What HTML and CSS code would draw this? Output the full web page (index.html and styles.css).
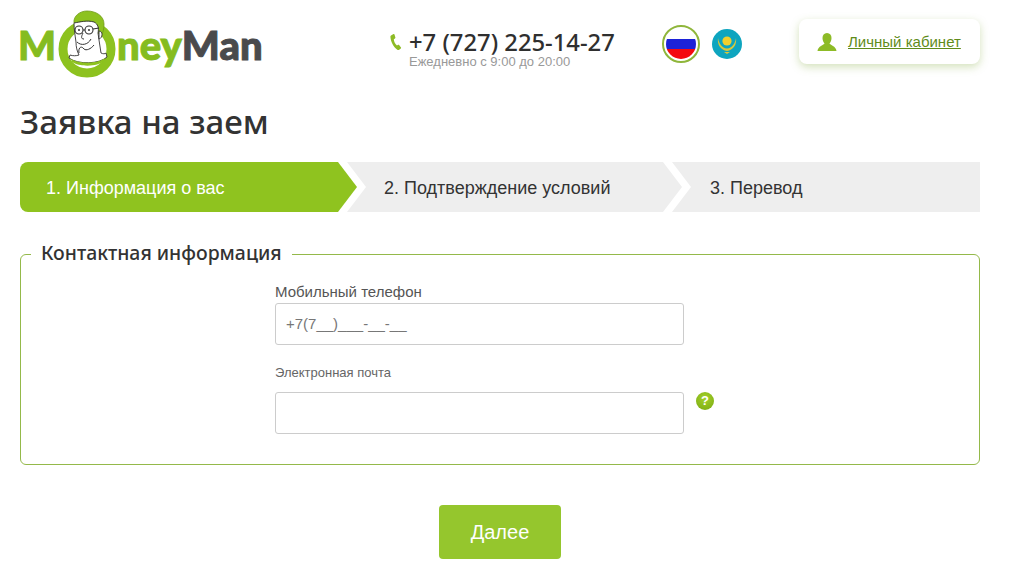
FILE: index.html
```html
<!DOCTYPE html>
<html lang="en">
<head>
    <meta charset="UTF-8">
    <meta name="viewport" content="width=device-width, initial-scale=1.0">
    <title>Заявка на заем - MoneyMan</title>
    <link rel="stylesheet" href="styles.css">
</head>
<body>
    <div class="page">
        <header class="header">
            <a class="logo" href="#">
                <span class="logo-green">M</span>
                <svg class="logo-face" width="60" height="70" viewBox="0 0 60 70">
                    <circle cx="29" cy="40" r="24" fill="none" stroke="#8dc21f" stroke-width="9"/>
                    <!-- hair -->
                    <path d="M16 14 C15 7 22 2 29 2 C38 2 46 7 46 15 C46 20 45 24 43 27 L40 24 C41 19 40 15 36 13 C29 11 22 13 16 14 Z" fill="#8dc21f" stroke="#6f9a16" stroke-width=".8"/>
                    <!-- face and neck -->
                    <path d="M16 14 C22 13 29 11 36 13 C40 15 41 19 40 24 L41 31 L43 44 C45 45 47 45 48 44 L49 48 C42 55 20 56 11 49 L12 46 C15 47 18 47 21 46 C19 42 18 38 18 33 C17 26 16 20 16 14 Z" fill="#fff" stroke="#333" stroke-width=".9"/>
                    <!-- collar -->
                    <path d="M13 50 C21 55 40 55 47 49 L46 52 C40 58 21 58 14 53 Z" fill="#8dc21f"/>
                    <!-- glasses -->
                    <circle cx="21" cy="21" r="4" fill="#fff" stroke="#333" stroke-width="1.1"/>
                    <circle cx="31" cy="21" r="4" fill="#fff" stroke="#333" stroke-width="1.1"/>
                    <path d="M25 21 H27 M35 20 L41 19" stroke="#333" stroke-width="1.1" fill="none"/>
                    <circle cx="21" cy="21" r="1" fill="#333"/>
                    <circle cx="31" cy="21" r="1" fill="#333"/>
                    <!-- nose, smile, hand -->
                    <path d="M25 24 C23 28 23 30 26 30 M19 33 C23 37 30 36 33 30 M21 44 C20 39 23 36 26 40 C28 42 33 40 36 36" fill="none" stroke="#333" stroke-width="1"/>
                    <!-- ear -->
                    <path d="M41 22 C45 22 45 29 41 30 Z" fill="#fff" stroke="#333" stroke-width=".9"/>
                </svg>
                <span class="logo-green logo-ney">ney</span><span class="logo-dark">Man</span>
            </a>

            <div class="contact">
                <svg class="phone-icon" width="12" height="18" viewBox="0 0 12 18">
                    <path d="M1 2.5 L3.5 1 C4 .8 4.4 1 4.5 1.4 L5.4 4.6 C5.5 5 5.3 5.3 5 5.5 L3.8 6.2 C3.9 8.4 5.2 11 7 12.4 L8.1 11.8 C8.5 11.6 8.9 11.7 9.1 12 L11 14.6 C11.2 15 11.1 15.3 10.8 15.6 L9.2 16.8 C8.6 17.2 7.9 17.1 7.3 16.7 C3.4 14 .7 8.5 .4 3.7 C.4 3.2 .6 2.8 1 2.5 Z" fill="#8dbb26"/>
                </svg>
                <div>
                    <div class="phone">+7 (727) 225-14-27</div>
                    <div class="hours">Ежедневно с 9:00 до 20:00</div>
                </div>
            </div>

            <div class="flags">
                <a class="flag-active" href="#">
                    <svg width="30" height="30" viewBox="0 0 30 30">
                        <defs><clipPath id="ruClip"><circle cx="15" cy="15" r="15"/></clipPath></defs>
                        <g clip-path="url(#ruClip)">
                            <rect width="30" height="10" fill="#fff"/>
                            <rect y="10" width="30" height="10" fill="#1c22d8"/>
                            <rect y="20" width="30" height="10" fill="#f4090f"/>
                        </g>
                    </svg>
                </a>
                <a class="flag" href="#">
                    <svg width="30" height="30" viewBox="0 0 30 30">
                        <circle cx="15" cy="15" r="15" fill="#0ea5bf"/>
                        <circle cx="15" cy="12" r="4.600" fill="#f2cf2c"/>
                        <path d="M6 9 C5 16 9 21 15 22 C21 21 25 16 24 9 C23 15 20 19 15 19.500 C10 19 7 15 6 9 Z" fill="#d9c83a"/>
                        <path d="M12 23 H18 L15 25 Z" fill="#d9c83a"/>
                    </svg>
                </a>
            </div>

            <div class="cabinet">
                <svg width="20" height="18" viewBox="0 0 20 18">
                    <path d="M10 0 C13 0 14.500 2.200 14.500 5 C14.500 7.500 13.500 9.500 12.500 10.500 C13 12 19 13 19.500 18 H.5 C1 13 7 12 7.500 10.500 C6.500 9.500 5.500 7.500 5.500 5 C5.500 2.200 7 0 10 0 Z" fill="#8dbb26"/>
                </svg>
                <a href="#">Личный кабинет</a>
            </div>
        </header>

        <h1 class="title">Заявка на заем</h1>

        <div class="steps">
            <div class="step step-first active">1. Информация о вас</div>
            <div class="step step-second">2. Подтверждение условий</div>
            <div class="step step-last">3. Перевод</div>
        </div>

        <form>
            <fieldset class="contact-box">
                <legend>Контактная информация</legend>
                <div class="fields">
                    <div class="form-group">
                        <label class="label-big" for="phone">Мобильный телефон</label>
                        <input type="text" id="phone" placeholder="+7(7__)___-__-__">
                    </div>
                    <div class="form-group form-group-email">
                        <label class="label-small" for="email">Электронная почта</label>
                        <div class="input-row">
                            <input type="email" id="email">
                            <span class="help">?</span>
                        </div>
                    </div>
                </div>
            </fieldset>
            <div class="actions">
                <button type="submit">Далее</button>
            </div>
        </form>
    </div>
</body>
</html>
```

FILE: styles.css
```css
* {
    box-sizing: border-box;
}
html, body {
    height: 567px;
    overflow: hidden;
}
body {
    margin: 0;
    background: #fff;
    font-family: "Liberation Sans", Arial, sans-serif;
    color: #333;
}
.page {
    width: 960px;
    margin-left: 20px;
}
.header {
    display: flex;
    align-items: flex-start;
    height: 92px;
}
.logo {
    display: flex;
    align-items: flex-start;
    width: 370px;
    height: 80px;
    margin-left: -2px;
    margin-right: 2px;
    font-family: Lato, sans-serif;
    font-weight: 900;
    font-size: 40px;
    line-height: 1;
    text-decoration: none;
    padding-top: 25px;
    -webkit-text-stroke: 1px;
}
.logo-green {
    color: #85bc20;
}
.logo-dark {
    color: #4a4a4c;
}
.logo-face {
    margin: -16px -1px 0 2px;
    flex: none;
}
.contact {
    display: flex;
    align-items: flex-start;
    width: 272px;
    padding-top: 30px;
}
.phone-icon {
    margin: 3px 7px 0 0;
}
.phone {
    font-family: "Noto Sans", sans-serif;
    font-size: 23.8px;
    font-weight: 500;
    line-height: 24px;
    color: #2f2f2f;
}
.hours {
    font-size: 13px;
    line-height: 13px;
    margin-top: 1px;
    color: #999;
}
.flags {
    display: flex;
    align-items: center;
    gap: 12px;
    width: 137px;
    padding-top: 25px;
}
.flag-active {
    display: flex;
    align-items: center;
    justify-content: center;
    width: 38px;
    height: 38px;
    border: 2px solid #8fb63b;
    border-radius: 50%;
}
.flag {
    display: flex;
}
.cabinet {
    display: flex;
    align-items: center;
    gap: 11px;
    width: 181px;
    height: 45px;
    margin-top: 19px;
    padding-left: 18px;
    background: #fff;
    border-radius: 8px;
    box-shadow: 0 3px 8px rgba(130, 170, 60, 0.35);
}
.cabinet a {
    font-size: 15px;
    color: #5f8c1a;
}
.title {
    margin: 0;
    height: 70px;
    padding-top: 10px;
    font-family: "Noto Sans", sans-serif;
    font-size: 33px;
    line-height: 40px;
    font-weight: 500;
    color: #333;
}
.steps {
    display: flex;
    height: 50px;
}
.step {
    flex: 1;
    margin-left: -10px;
    padding-left: 38px;
    line-height: 52px;
    font-size: 18px;
    background: #eee;
    clip-path: polygon(0 0, calc(100% - 19px) 0, 100% 50%, calc(100% - 19px) 100%, 0 100%, 19px 50%);
}
.step-first {
    flex: none;
    width: 337px;
    margin-left: 0;
    padding-left: 26px;
    border-radius: 8px 0 0 8px;
    clip-path: polygon(0 0, calc(100% - 19px) 0, 100% 50%, calc(100% - 19px) 100%, 0 100%);
}
.step-second {
    flex: none;
    width: 335px;
    padding-left: 37px;
}
.step-last {
    clip-path: polygon(0 0, 100% 0, 100% 100%, 0 100%, 19px 50%);
}
.active {
    background: #8fc31f;
    color: #fff;
}
.contact-box {
    margin: 28px 0 0;
    padding: 13px 0 0;
    height: 225px;
    border: 1px solid #94b94a;
    border-radius: 6px;
    min-width: 0;
}
.contact-box legend {
    margin-left: 10px;
    padding: 0 10px 2px;
    font-family: "Noto Sans", sans-serif;
    font-size: 19.4px;
    line-height: 26px;
    font-weight: 500;
    color: #333;
}
.fields {
    margin-left: 254px;
}
.form-group label {
    display: block;
}
.label-big {
    font-size: 15px;
    line-height: 22px;
    color: #555;
}
.label-small {
    font-size: 13px;
    line-height: 16px;
    color: #666;
    margin-bottom: 11px;
}
.form-group-email {
    margin-top: 20px;
}
.input-row {
    display: flex;
    align-items: flex-start;
}
input {
    width: 409px;
    height: 42px;
    padding: 0 10px 2px;
    border: 1px solid #ccc;
    border-radius: 3px;
    font-family: "Liberation Sans", Arial, sans-serif;
    font-size: 15px;
    color: #333;
    background: #fff;
}
input::placeholder {
    color: #777;
    opacity: 1;
}
.help {
    width: 18px;
    height: 18px;
    margin: 0 0 0 12px;
    border-radius: 50%;
    background: radial-gradient(circle at 50% 35%, #a5d22c, #78a80f);
    color: #fff;
    font-size: 13px;
    font-weight: bold;
    line-height: 18px;
    text-align: center;
}
.actions {
    display: flex;
    justify-content: center;
    margin-top: 40px;
}
button {
    width: 122px;
    height: 54px;
    border: none;
    border-radius: 4px;
    background: #95c62d;
    color: #fff;
    font-family: "Liberation Sans", Arial, sans-serif;
    font-size: 20px;
    cursor: pointer;
}
```
